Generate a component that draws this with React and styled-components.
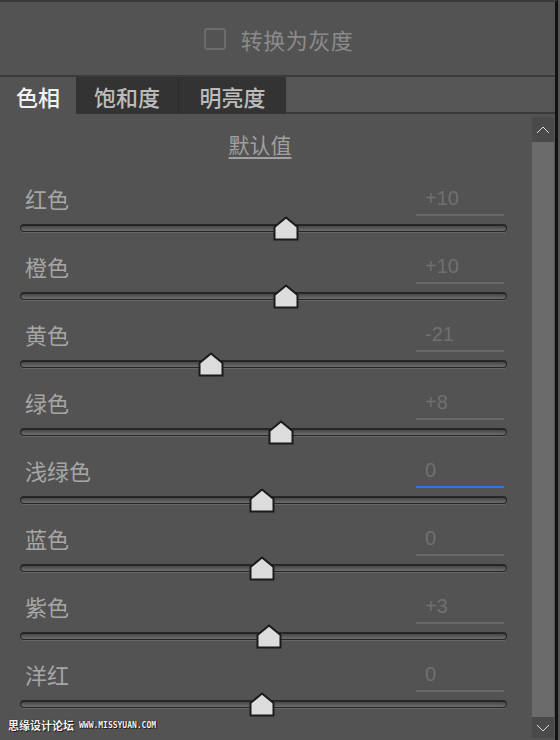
import React from "react";
import styled, { createGlobalStyle } from "styled-components";

const GlobalStyle = createGlobalStyle`
  html, body {
    margin: 0;
    padding: 0;
    background: #535353;
  }
  body {
    font-family: "Noto Sans CJK SC", "Noto Sans", sans-serif;
  }
`;

const Panel = styled.div`
  position: relative;
  width: 558px;
  height: 740px;
  box-sizing: border-box;
  background: #535353;
  border-top: 2px solid #3b3b3b;
  border-right: 3px solid #121212;
  display: flex;
  flex-direction: column;
  overflow: hidden;
`;

const Header = styled.div`
  height: 75px;
  flex-shrink: 0;
  box-sizing: border-box;
  border-bottom: 2px solid #3b3b3b;
  display: flex;
  align-items: center;
  justify-content: center;
  gap: 15px;
  padding-left: 2px;
`;

const Checkbox = styled.span`
  width: 22px;
  height: 22px;
  box-sizing: border-box;
  border: 2px solid #6b6b6b;
  border-radius: 3px;
`;

const HeaderText = styled.span`
  font-size: 22px;
  color: #8b8b8b;
  letter-spacing: 0.5px;
`;

const TabBar = styled.div`
  height: 37px;
  flex-shrink: 0;
  display: flex;
`;

const Tab = styled.div`
  width: ${(p) => p.w}px;
  box-sizing: border-box;
  display: flex;
  align-items: center;
  justify-content: center;
  font-size: 22px;
  font-weight: 500;
  color: ${(p) => (p.active ? "#f2f2f2" : "#bcbcbc")};
  background: ${(p) => (p.active ? "#535353" : "#333333")};
  border-left: ${(p) => (p.divider ? "1px solid #2c2c2c" : "none")};
`;

const TabFill = styled.div`
  flex: 1;
  box-sizing: border-box;
  background: #555555;
  border-bottom: 2px solid #393939;
`;

const Body = styled.div`
  flex: 1;
  display: flex;
  min-height: 0;
`;

const Content = styled.div`
  flex: 1;
  padding-top: 16px;
`;

const DefaultLink = styled.div`
  text-align: center;
  padding-right: 12px;
  font-size: 21px;
  line-height: 28px;
  color: #a0a0a0;
  text-decoration: underline;
  text-underline-offset: 4px;
  margin-bottom: 22px;
`;

const Row = styled.div`
  height: 68px;
`;

const RowTop = styled.div`
  height: 36px;
  display: flex;
  justify-content: space-between;
  padding: 0 28px 0 25px;
`;

const Label = styled.span`
  font-size: 22px;
  line-height: 36px;
  color: #a6a6a6;
`;

const ValueBox = styled.div`
  width: 88px;
  height: 36px;
  box-sizing: border-box;
  padding-left: 9px;
  border-bottom: 2px solid ${(p) => (p.focused ? "#2d78d6" : "#686868")};
  font-family: "Liberation Sans", Arial, sans-serif;
  font-size: 20px;
  line-height: 36px;
  color: #707070;
`;

const SliderArea = styled.div`
  height: 32px;
  padding-top: 8px;
  box-sizing: border-box;
`;

const Track = styled.div`
  position: relative;
  margin: 0 25px 0 20px;
  height: 8px;
  box-sizing: border-box;
  border-radius: 4px;
  border: 1.5px solid #262626;
  border-top-width: 2px;
  background: linear-gradient(#474747, #6c6c6c);
  box-shadow: 0 1px 0 #676767;
`;

const Thumb = styled.svg`
  position: absolute;
  top: -10px;
  width: 26px;
  height: 25px;
`;

const ScrollBar = styled.div`
  width: 22px;
  margin: 3px 1px 2px 0;
  display: flex;
  flex-direction: column;
`;

const ScrollButton = styled.div`
  height: ${(p) => p.h}px;
  background: #4a4a4a;
  display: flex;
  align-items: center;
  justify-content: center;
`;

const ScrollTrack = styled.div`
  flex: 1;
  background: #6b6b6b;
`;

const Watermark = styled.div`
  position: absolute;
  left: 8px;
  bottom: 7px;
  display: flex;
  align-items: center;
  gap: 5px;
  color: #f4f4f4;
  text-shadow: 0 0 1px #000, 1px 1px 0 #222;
`;

const WatermarkCn = styled.span`
  font-size: 11px;
  font-weight: 700;
`;

const WatermarkUrl = styled.span`
  font-family: "DejaVu Sans Mono", monospace;
  font-size: 8px;
  font-weight: 700;
`;

const rows = [
  { label: "红色", value: 10 },
  { label: "橙色", value: 10 },
  { label: "黄色", value: -21 },
  { label: "绿色", value: 8 },
  { label: "浅绿色", value: 0, focused: true },
  { label: "蓝色", value: 0 },
  { label: "紫色", value: 3 },
  { label: "洋红", value: 0 },
];

const fmt = (v) => (v > 0 ? `+${v}` : v < 0 ? `-${Math.abs(v)}` : "0");

const Chevron = ({ down }) => (
  <svg width="14" height="8" viewBox="0 0 14 8">
    <polyline
      points={down ? "1,1 7,7 13,1" : "1,7 7,1 13,7"}
      fill="none"
      stroke="#d8d8d8"
      strokeWidth="1"
    />
  </svg>
);

const HueRow = ({ label, value, focused }) => (
  <Row>
    <RowTop>
      <Label>{label}</Label>
      <ValueBox focused={focused}>{fmt(value)}</ValueBox>
    </RowTop>
    <SliderArea>
      <Track>
        <Thumb viewBox="0 0 26 25" style={{ left: 242 + value * 2.42 - 14 }}>
          <polygon
            points="13,1.5 24.5,11 24.5,23.5 1.5,23.5 1.5,11"
            fill="#dcdcdc"
            stroke="#1b1b1b"
            strokeWidth="2"
            strokeLinejoin="miter"
          />
        </Thumb>
      </Track>
    </SliderArea>
  </Row>
);

export default function App() {
  return (
    <>
      <GlobalStyle />
      <Panel>
        <Header>
          <Checkbox />
          <HeaderText>转换为灰度</HeaderText>
        </Header>
        <TabBar>
          <Tab active w={76}>色相</Tab>
          <Tab w={102}>饱和度</Tab>
          <Tab divider w={108}>明亮度</Tab>
          <TabFill />
        </TabBar>
        <Body>
          <Content>
            <DefaultLink>默认值</DefaultLink>
            {rows.map((r) => (
              <HueRow key={r.label} {...r} />
            ))}
          </Content>
          <ScrollBar>
            <ScrollButton h={25}>
              <Chevron />
            </ScrollButton>
            <ScrollTrack />
            <ScrollButton h={21}>
              <Chevron down />
            </ScrollButton>
          </ScrollBar>
        </Body>
        <Watermark>
          <WatermarkCn>思缘设计论坛</WatermarkCn>
          <WatermarkUrl>WWW.MISSYUAN.COM</WatermarkUrl>
        </Watermark>
      </Panel>
    </>
  );
}
